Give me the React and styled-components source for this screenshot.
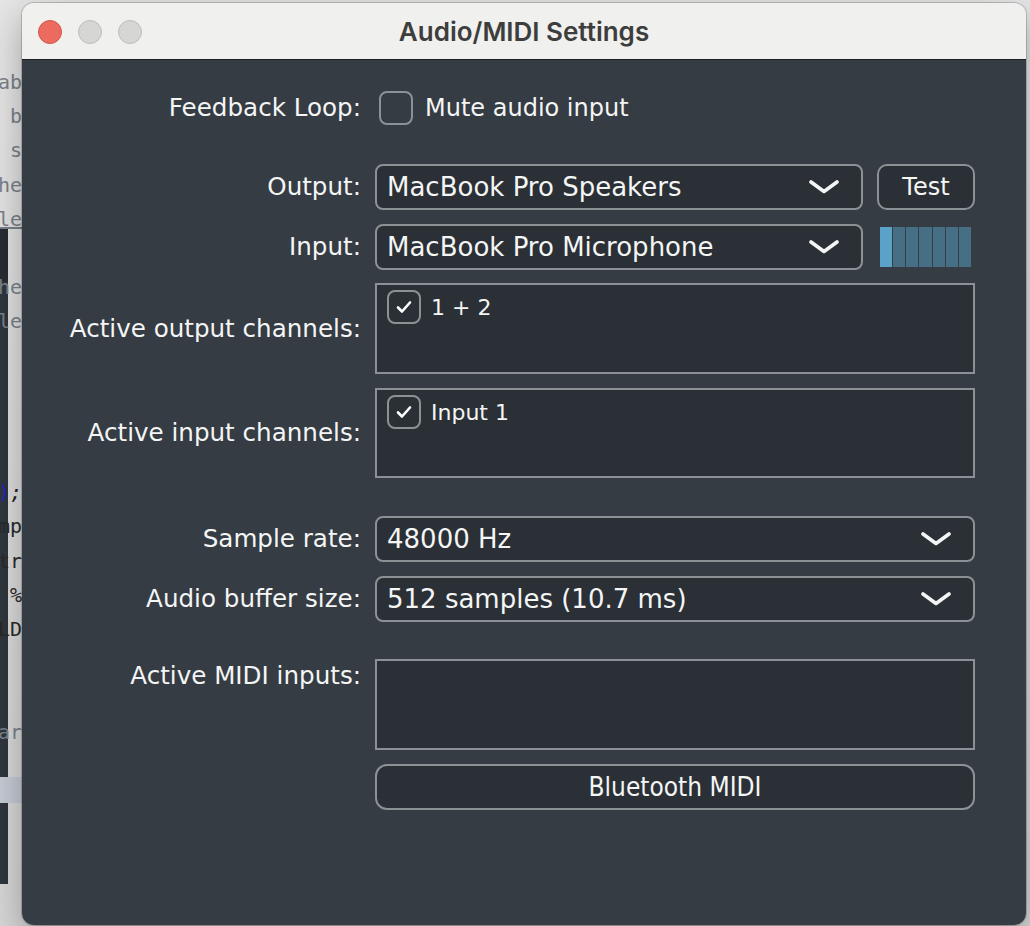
import React from "react";
import styled, { createGlobalStyle } from "styled-components";

const GlobalStyle = createGlobalStyle`
  html, body {
    margin: 0;
    padding: 0;
  }
  body {
    background: #dedede;
    font-family: "DejaVu Sans", "Liberation Sans", sans-serif;
    overflow: hidden;
  }
`;

const Desktop = styled.div`
  position: relative;
  width: 1030px;
  height: 926px;
  overflow: hidden;
  background: linear-gradient(180deg, #e6e6e6 0%, #d6d6d6 100%);
`;

/* the code editor peeking out behind the window */
const CodeStrip = styled.div`
  position: relative;
  width: 22px;
  height: 100%;
  padding-top: 65px;
  box-sizing: border-box;
  display: flex;
  flex-direction: column;
  font-family: "DejaVu Sans Mono", "Liberation Mono", monospace;
  font-size: 20px;
`;

const DarkPane = styled.div`
  position: absolute;
  left: 0;
  top: 228px;
  width: 8px;
  height: 656px;
  background: linear-gradient(180deg, #262c31 0px, #262c31 54px, #2f363d 54px);
`;

const CodeLine = styled.div`
  position: relative;
  height: 34.2px;
  line-height: 34.2px;
  display: flex;
  justify-content: flex-end;
  white-space: nowrap;
  color: ${(p) => p.$color || "#7b8189"};
  text-decoration: ${(p) => (p.$underline ? "underline" : "none")};
`;

const HighlightLine = styled.div`
  position: relative;
  height: 26px;
  margin-top: -6px;
  background: #c6ccd5;
`;

const Paren = styled.span`
  color: #2323c8;
`;

const Semi = styled.span`
  color: #222;
  font-style: italic;
`;

const Window = styled.div`
  position: absolute;
  left: 22px;
  top: 3px;
  width: 1004px;
  height: 922px;
  border-radius: 12px;
  overflow: hidden;
  display: flex;
  flex-direction: column;
  box-shadow: 0 0 0 1px rgba(0, 0, 0, 0.18), 0 12px 36px rgba(0, 0, 0, 0.3);
`;

const TitleBar = styled.div`
  position: relative;
  height: 56px;
  flex-shrink: 0;
  background: #f0f0ee;
  border-bottom: 1px solid #1b1f23;
  display: flex;
  align-items: center;
  justify-content: center;
`;

const Lights = styled.div`
  position: absolute;
  left: 16px;
  top: 17px;
  display: flex;
  gap: 16px;
`;

const Light = styled.span`
  width: 22px;
  height: 22px;
  border-radius: 50%;
  background: ${(p) => (p.$red ? "#ec6a5e" : "#d6d6d4")};
  border: 1px solid ${(p) => (p.$red ? "#d2574b" : "#bdbdbb")};
`;

const Title = styled.div`
  font-family: Inter, "Liberation Sans", sans-serif;
  font-weight: 600;
  font-size: 26px;
  color: #3d3d3d;
`;

const Body = styled.div`
  flex: 1;
  background: #363c43;
  padding-top: 31px;
  display: flex;
  flex-direction: column;
  color: #f4f5f5;
`;

const Row = styled.div`
  display: grid;
  grid-template-columns: 339px 600px;
  column-gap: 14px;
  margin-top: ${(p) => p.$gap || 0}px;
`;

const Label = styled.div`
  font-size: 24.6px;
  line-height: 34px;
  text-align: right;
  align-self: ${(p) => (p.$top ? "start" : "center")};
  white-space: nowrap;
`;

const Controls = styled.div`
  display: flex;
  align-items: center;
  gap: ${(p) => p.$gap || 14}px;
  padding-left: ${(p) => p.$inset || 0}px;
`;

const CheckBox = styled.span`
  width: 34px;
  height: 34px;
  box-sizing: border-box;
  border: 2px solid #8b9295;
  border-radius: 8px;
  display: flex;
  align-items: center;
  justify-content: center;
  flex-shrink: 0;
`;

const CheckText = styled.span`
  font-size: ${(p) => p.$size || 24}px;
  white-space: nowrap;
`;

const Combo = styled.div`
  width: ${(p) => p.$width || 600}px;
  height: 46px;
  box-sizing: border-box;
  border: 2px solid #8b9295;
  border-radius: 8px;
  background: #2a3036;
  display: flex;
  align-items: center;
  justify-content: space-between;
  padding: 0 22px 0 10px;
  font-size: 26px;
`;

const Button = styled.div`
  width: ${(p) => p.$width || 600}px;
  height: 46px;
  box-sizing: border-box;
  border: 2px solid #8b9295;
  border-radius: ${(p) => p.$radius || 10}px;
  background: #2a3036;
  display: flex;
  align-items: center;
  justify-content: center;
  font-size: ${(p) => p.$size || 24}px;
  font-family: ${(p) =>
    p.$condensed
      ? '"DejaVu Sans Condensed", "DejaVu Sans", sans-serif'
      : '"DejaVu Sans", sans-serif'};
`;

const Meter = styled.div`
  width: 91px;
  height: 40px;
  display: flex;
  gap: 1px;
  margin-left: 3px;
`;

const Segment = styled.span`
  flex: 1;
  background: ${(p) => (p.$on ? "#5ba2c8" : "#466f86")};
`;

const ListBox = styled.div`
  height: ${(p) => p.$height || 91}px;
  box-sizing: border-box;
  border: 2px solid #8b9295;
  background: #2a3036;
  padding: 5px 10px;
`;

const ListItem = styled.div`
  display: flex;
  align-items: center;
  gap: 10px;
`;

const Chevron = () => (
  <svg width="30" height="14" viewBox="0 0 30 14">
    <polyline
      points="2,2 15,11.5 28,2"
      fill="none"
      stroke="#f4f5f5"
      strokeWidth="3.6"
      strokeLinecap="round"
      strokeLinejoin="round"
    />
  </svg>
);

const Tick = () => (
  <svg width="16" height="14" viewBox="0 0 16 14">
    <polyline
      points="2,7.5 6,11.5 14,2.5"
      fill="none"
      stroke="#ffffff"
      strokeWidth="2.6"
      strokeLinecap="round"
      strokeLinejoin="round"
    />
  </svg>
);

const codeLines = [
  { t: "ab" },
  { t: "b" },
  { t: "s" },
  { t: "he" },
  { t: "le", u: true },
  { t: "" },
  { t: "he" },
  { t: "le" },
  { t: "" },
  { t: "" },
  { t: "" },
  { t: "" },
  { t: "paren" },
  { t: "mp", c: "#2a2a2a" },
  { t: "tr", c: "#2a2a2a" },
  { t: "%", c: "#2a2a2a" },
  { t: "LD", c: "#2a2a2a" },
  { t: "" },
  { t: "" },
  { t: "ar" },
  { t: "" },
];

const meter = [true, false, false, false, false, false, false];

export default function App() {
  return (
    <>
      <GlobalStyle />
      <Desktop>
        <CodeStrip>
          <DarkPane />
          {codeLines.map((l, i) => (
            <CodeLine key={i} $color={l.c} $underline={l.u}>
              {l.t === "paren" ? (
                <>
                  <Paren>)</Paren>
                  <Semi>;</Semi>
                </>
              ) : (
                l.t
              )}
            </CodeLine>
          ))}
          <HighlightLine />
        </CodeStrip>

        <Window>
          <TitleBar>
            <Lights>
              <Light $red />
              <Light />
              <Light />
            </Lights>
            <Title>Audio/MIDI Settings</Title>
          </TitleBar>

          <Body>
            <Row>
              <Label>Feedback Loop:</Label>
              <Controls $gap={12} $inset={4}>
                <CheckBox />
                <CheckText>Mute audio input</CheckText>
              </Controls>
            </Row>

            <Row $gap={39}>
              <Label>Output:</Label>
              <Controls>
                <Combo $width={488}>
                  <span>MacBook Pro Speakers</span>
                  <Chevron />
                </Combo>
                <Button $width={98}>Test</Button>
              </Controls>
            </Row>

            <Row $gap={14}>
              <Label>Input:</Label>
              <Controls>
                <Combo $width={488}>
                  <span>MacBook Pro Microphone</span>
                  <Chevron />
                </Combo>
                <Meter>
                  {meter.map((on, i) => (
                    <Segment key={i} $on={on} />
                  ))}
                </Meter>
              </Controls>
            </Row>

            <Row $gap={13}>
              <Label>Active output channels:</Label>
              <ListBox>
                <ListItem>
                  <CheckBox>
                    <Tick />
                  </CheckBox>
                  <CheckText $size={22}>1 + 2</CheckText>
                </ListItem>
              </ListBox>
            </Row>

            <Row $gap={14}>
              <Label>Active input channels:</Label>
              <ListBox $height={90}>
                <ListItem>
                  <CheckBox>
                    <Tick />
                  </CheckBox>
                  <CheckText $size={22}>Input 1</CheckText>
                </ListItem>
              </ListBox>
            </Row>

            <Row $gap={38}>
              <Label>Sample rate:</Label>
              <Combo>
                <span>48000 Hz</span>
                <Chevron />
              </Combo>
            </Row>

            <Row $gap={14}>
              <Label>Audio buffer size:</Label>
              <Combo>
                <span>512 samples (10.7 ms)</span>
                <Chevron />
              </Combo>
            </Row>

            <Row $gap={37}>
              <Label $top>Active MIDI inputs:</Label>
              <ListBox />
            </Row>

            <Row $gap={14}>
              <span />
              <Button $radius={12} $size={26} $condensed>
                Bluetooth MIDI
              </Button>
            </Row>
          </Body>
        </Window>
      </Desktop>
    </>
  );
}
